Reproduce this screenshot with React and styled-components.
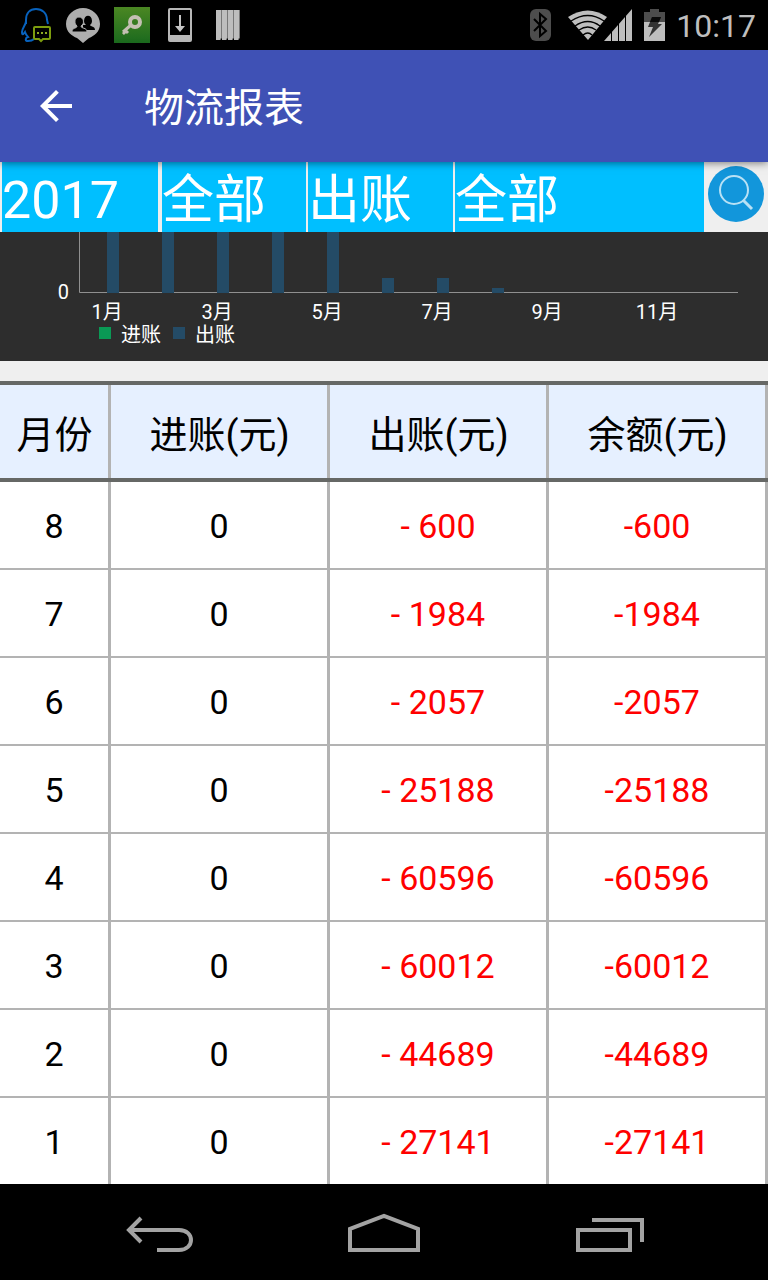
import React from "react";
import styled, { createGlobalStyle } from "styled-components";

const GlobalStyle = createGlobalStyle`
  *, *::before, *::after { box-sizing: border-box; }
  body {
    margin: 0;
    background: #efefef;
    color: #000;
    font-family: Roboto, "Noto Sans CJK SC", sans-serif;
  }
  svg { display: block; }
`;

const Page = styled.div`
  min-height: 100vh;
  display: flex;
  flex-direction: column;
`;

const StatusBar = styled.div`
  height: 50px;
  padding: 0 12px 0 20px;
  display: flex;
  align-items: center;
  justify-content: space-between;
  background: #000;
`;

const StatusGroup = styled.div`
  display: flex;
  align-items: center;
  gap: ${(p) => p.$gap};
`;

const Clock = styled.time`
  color: #bebebe;
  font-size: 32px;
  line-height: 48px;
  padding-top: 2px;
`;

const AppBar = styled.header`
  height: 112px;
  padding-left: 32px;
  display: flex;
  align-items: center;
  gap: 64px;
  position: relative;
  background: #3f51b5;
  box-shadow: 0 1px 8px rgba(0, 0, 0, 0.5);
`;

const IconButton = styled.button`
  padding: 0;
  border: 0;
  background: none;
  display: flex;
  align-items: center;
  justify-content: center;
  width: ${(p) => p.$width};
  height: ${(p) => p.$height};
`;

const Title = styled.h1`
  margin: 0;
  padding-top: 6px;
  color: #fff;
  font-size: 40px;
  font-weight: 400;
  line-height: 48px;
`;

const Filters = styled.form`
  display: grid;
  grid-template-columns: 160fr 146fr 147fr 251fr 64px;
  height: 70px;
`;

const FilterSelect = styled.select`
  appearance: none;
  min-width: 0;
  width: 100%;
  height: 70px;
  padding: 8px 0 0;
  border: 0 solid #efefef;
  border-left-width: 2px;
  border-right-width: ${(p) => (p.$divided ? "2px" : "0")};
  border-radius: 0;
  background: #00bfff;
  color: #fff;
  font: 400 52px/62px Roboto, "Noto Sans CJK SC", sans-serif;
`;

const ChartPanel = styled.section`
  background: #2d2d2d;
  margin-bottom: 20px;

  svg { width: 100%; height: auto; }
  text { fill: #fff; font-size: 20px; }
`;

const Table = styled.table`
  width: 100%;
  table-layout: fixed;
  border-collapse: separate;
  border-spacing: 0;
  border-top: 4px solid #666866;
  background: #fff;
`;

const MonthColumn = styled.col`
  width: 111px;
`;

const HeadCell = styled.th`
  height: 97px;
  padding: 6px 2px 0 0;
  border-bottom: 4px solid #666866;
  background: #e6f0ff;
  box-shadow: inset -3px 0 #b3b3b3;
  font-size: 38px;
  font-weight: 400;
  line-height: 48px;
`;

const Cell = styled.td`
  height: 88px;
  padding: 2px 0 0;
  border-right: 3px solid #b3b3b3;
  border-bottom: 2px solid #b3b3b3;
  color: ${(p) => (p.$negative ? "#f00" : "#000")};
  font-size: 34px;
  line-height: 40px;
  text-align: center;

  tr:last-child > & { height: 86px; border-bottom: 0; }
`;

const NavBar = styled.nav`
  height: 96px;
  margin-top: auto;
  display: flex;
  justify-content: center;
  background: #000;
`;

const months = [
  [8, "600"],
  [7, "1984"],
  [6, "2057"],
  [5, "25188"],
  [4, "60596"],
  [3, "60012"],
  [2, "44689"],
  [1, "27141"],
];

const barHeights = [61, 61, 61, 61, 61, 15, 15, 5];
const monthLabels = [1, 3, 5, 7, 9, 11];

const ChatIcon = () => (
  <svg width="32" height="36" viewBox="0 0 32 36" fill="none" aria-hidden="true">
    <path d="M6 17V13C6 6 10 2 16 2s11 4 11 11l1 4M6 14c0 4-4 7-4 11 0 3 1 3 3 0 1 3 2 4 3 5-3 1-3 4 0 4 2 0 4 0 6-2" stroke="#0862bd" strokeWidth="2" />
    <path d="M15 20h14q1 0 1 1v10q0 1-1 1h-6l-2 2-2-2h-4q-1 0-1-1V21q0-1 1-1z" stroke="#7d9d0e" strokeWidth="2" />
    <path d="M17 26h2m2 0h2m2 0h2" stroke="#8fac22" strokeWidth="2" />
  </svg>
);

const PeopleIcon = () => (
  <svg width="34" height="36" viewBox="0 0 34 36" aria-hidden="true">
    <path d="M17 1C8 1 0 8 0 17c0 8 6 12 11 14l6 5 6-5c5-2 11-6 11-14C34 8 26 1 17 1z" fill="#aeaeae" />
    <path d="M18 14c0-7 8-7 8 0 0 2-1 3-2 4 1 2 5 1 5 5H17v-5h3c-1-1-2-2-2-4z" />
    <path d="M6 25c0-5 5-3 5-6-3-2-3-9 2-9s6 7 2 9c0 3 6 1 6 6z" stroke="#aeaeae" />
  </svg>
);

const KeyIcon = () => (
  <svg width="36" height="36" viewBox="0 0 36 36" fill="none" aria-hidden="true">
    <defs>
      <linearGradient id="keyGreen" x1="0" y1="0" x2="0" y2="1">
        <stop stopColor="#4b8723" />
        <stop offset="1" stopColor="#1b6a1e" />
      </linearGradient>
    </defs>
    <path fill="url(#keyGreen)" d="M0 0h36v36H0z" />
    <circle cx="21" cy="15" r="5" stroke="#c4c0b3" strokeWidth="4" />
    <path d="M17 18l-8 7m2-2 3 3m-5-1 2 2" stroke="#c4c0b3" strokeWidth="3" />
  </svg>
);

const DownloadIcon = () => (
  <svg width="24" height="34" viewBox="0 0 24 34" aria-hidden="true">
    <path d="M2 0h20q2 0 2 2v30q0 2-2 2H2q-2 0-2-2V2q0-2 2-2zM2 2v25h20V2z" fill="#b8b8b8" fillRule="evenodd" />
    <path d="M11 7h2v11h4l-5 6-5-6h4z" fill="#c4c4c4" />
  </svg>
);

const StripesIcon = () => (
  <svg width="24" height="30" viewBox="0 0 24 30" aria-hidden="true">
    {[0, 6, 12, 18].map((x) => (
      <g key={x} transform={`translate(${x} 0)`}>
        <path d="M0 0h5v29l-1 1H0z" fill="#bdbdbd" />
        <path d="M5 0h1v28l-2 2V29l1-1z" fill="#777" />
      </g>
    ))}
  </svg>
);

const BluetoothIcon = () => (
  <svg width="21" height="32" viewBox="0 0 21 32" fill="none" aria-hidden="true">
    <rect width="21" height="32" rx="6" fill="#4d4d4d" />
    <path d="M4 10l12 12-6 5V5l6 5L4 22" stroke="#000" strokeWidth="2" />
  </svg>
);

const WifiSignalIcon = () => (
  <svg width="65" height="32" viewBox="0 0 65 32" fill="none" aria-hidden="true">
    <path d="M0 8Q20-5 39 8L20 31z" fill="#bebebe" />
    <path d="M3 12Q20 1 36 12M7 17Q20 8 32 17M11 21Q20 15 28 21M15 26Q20 22 24 26" stroke="#000" strokeWidth="1.3" />
    <path d="M36 32L64 0v32z" fill="#bebebe" />
    <path d="M43.500 32V21M50.500 32V13M57.500 32V5" stroke="#000" />
  </svg>
);

const BatteryIcon = () => (
  <svg width="21" height="32" viewBox="0 0 21 32" aria-hidden="true">
    <path d="M6 0h9v3h6v10H0V3h6z" fill="#4d4d4d" />
    <path d="M0 13h21v19H0z" fill="#bebebe" />
    <path d="M8 8h9l-3 7h4L5 28l4-10H4z" fill="#333" />
    <path d="M8 8h9l-2 5H6z" fill="#0b0b0b" />
  </svg>
);

const ArrowIcon = () => (
  <svg width="48" height="48" viewBox="0 0 24 24" fill="#fff" aria-hidden="true">
    <path d="M20 11H7.83l5.59-5.59L12 4l-8 8 8 8 1.41-1.41L7.83 13H20z" />
  </svg>
);

const SearchIcon = () => (
  <svg width="64" height="70" viewBox="0 0 64 70" fill="none" aria-hidden="true">
    <circle cx="32" cy="32" r="28" fill="#1296db" />
    <circle cx="30" cy="28" r="14" stroke="#b8e1f5" strokeWidth="2" />
    <path d="M39 38l9 9" stroke="#b8e1f5" strokeWidth="3" />
  </svg>
);

const NavIcon = ({ children }) => (
  <svg width="72" height="48" viewBox="0 0 72 48" fill="none" stroke="#a3a3a3" strokeWidth="4" aria-hidden="true">
    {children}
  </svg>
);

const Chart = () => (
  <ChartPanel>
    <svg viewBox="0 0 768 129" role="img" aria-label="进账 出账">
      <path d="M79.5 0v60.500H738" stroke="#909090" fill="none" />
      {barHeights.map((height, i) => (
        <rect key={i} x={107 + i * 55} y={61 - height} width="12" height={height} fill="#244b66" />
      ))}
      <text x="69" y="67" textAnchor="end">0</text>
      {monthLabels.map((month, i) => (
        <text key={month} x={107 + i * 110} y="87" textAnchor="middle">{month}月</text>
      ))}
      <rect x="99" y="95" width="12" height="12" fill="#0a9955" />
      <text x="121" y="110">进账</text>
      <rect x="173" y="95" width="12" height="12" fill="#244b66" />
      <text x="195" y="110">出账</text>
    </svg>
  </ChartPanel>
);

export default function App() {
  return (
    <Page>
      <GlobalStyle />
      <StatusBar>
        <StatusGroup $gap="18px">
          <StatusGroup $gap="14px">
            <ChatIcon />
            <PeopleIcon />
            <KeyIcon />
          </StatusGroup>
          <StatusGroup $gap="24px">
            <DownloadIcon />
            <StripesIcon />
          </StatusGroup>
        </StatusGroup>
        <StatusGroup $gap="17px">
          <BluetoothIcon />
          <StatusGroup $gap="11px">
            <WifiSignalIcon />
            <BatteryIcon />
            <Clock>10:17</Clock>
          </StatusGroup>
        </StatusGroup>
      </StatusBar>
      <AppBar>
        <IconButton type="button" aria-label="返回" $width="48px" $height="48px">
          <ArrowIcon />
        </IconButton>
        <Title>物流报表</Title>
      </AppBar>
      <Filters onSubmit={(e) => e.preventDefault()}>
        <FilterSelect aria-label="年份" $divided>
          <option>2017</option>
        </FilterSelect>
        <FilterSelect aria-label="月份">
          <option>全部</option>
        </FilterSelect>
        <FilterSelect aria-label="类型">
          <option>出账</option>
        </FilterSelect>
        <FilterSelect aria-label="分类">
          <option>全部</option>
        </FilterSelect>
        <IconButton type="submit" aria-label="搜索" $width="64px" $height="70px">
          <SearchIcon />
        </IconButton>
      </Filters>
      <Chart />
      <Table>
        <colgroup>
          <MonthColumn />
          <col />
          <col />
          <col />
        </colgroup>
        <thead>
          <tr>
            <HeadCell scope="col">月份</HeadCell>
            <HeadCell scope="col">进账(元)</HeadCell>
            <HeadCell scope="col">出账(元)</HeadCell>
            <HeadCell scope="col">余额(元)</HeadCell>
          </tr>
        </thead>
        <tbody>
          {months.map(([month, amount]) => (
            <tr key={month}>
              <Cell>{month}</Cell>
              <Cell>0</Cell>
              <Cell $negative>- {amount}</Cell>
              <Cell $negative>-{amount}</Cell>
            </tr>
          ))}
        </tbody>
      </Table>
      <NavBar>
        <IconButton type="button" aria-label="后退" $width="224px" $height="96px">
          <NavIcon>
            <path d="M17 10L5 22l12 12M5 22h50c16 0 16 20 0 20H33" />
          </NavIcon>
        </IconButton>
        <IconButton type="button" aria-label="主页" $width="224px" $height="96px">
          <NavIcon>
            <path d="M2 42V21L36 8l34 13v21z" />
          </NavIcon>
        </IconButton>
        <IconButton type="button" aria-label="最近任务" $width="224px" $height="96px">
          <NavIcon>
            <path d="M6 22h52v20H6zM20 12h50v22" />
          </NavIcon>
        </IconButton>
      </NavBar>
    </Page>
  );
}
